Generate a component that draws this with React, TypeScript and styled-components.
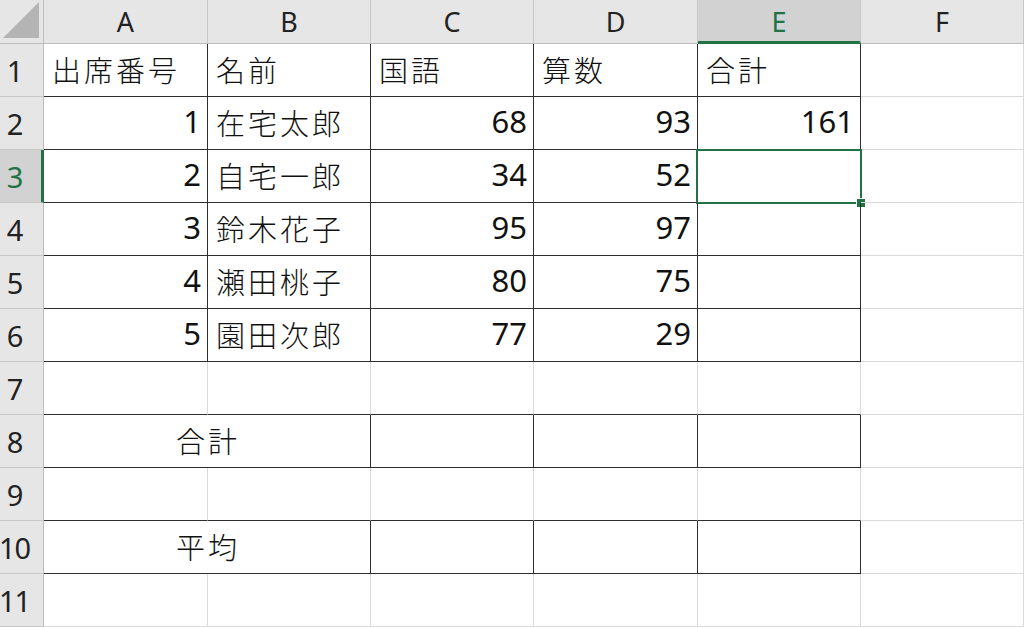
import styled, { createGlobalStyle } from "styled-components";

const GlobalStyle = createGlobalStyle`
    html, body {
        margin: 0;
        padding: 0;
        background: #ffffff;
        overflow: hidden;
    }
    body {
        font-family: "Noto Sans CJK JP", "Noto Sans", sans-serif;
        color: #111;
    }
`;

const GRID = "#dadada";
const LINE = "#2e2e2e";
const GREEN = "#217346";

const Sheet = styled.div`
    display: grid;
    grid-template-columns: 44px 164px 163px 163px 164px 163px 1fr;
    grid-template-rows: 44px repeat(11, 53px);
    width: 1024px;
    height: 628px;
    overflow: hidden;
`;

const Corner = styled.div`
    background: #e6e6e6;
    border-right: 1px solid #bdbdbd;
    border-bottom: 1px solid #bdbdbd;
    box-sizing: border-box;
    display: flex;
    align-items: flex-end;
    justify-content: flex-end;
    padding: 0 4px 5px 0;
    svg {
        display: block;
    }
`;

const ColHead = styled.div<{ $active?: boolean }>`
    box-sizing: border-box;
    background: ${(p) => (p.$active ? "#d2d2d2" : "#e6e6e6")};
    color: ${(p) => (p.$active ? GREEN : "#222")};
    border-right: 1px solid #c8c8c8;
    border-bottom: ${(p) => (p.$active ? `3px solid ${GREEN}` : "1px solid #bdbdbd")};
    display: flex;
    align-items: center;
    justify-content: center;
    padding-top: ${(p) => (p.$active ? "2px" : "0")};
    font-family: "Noto Sans", sans-serif;
    font-size: 27px;
    line-height: 1;
`;

const RowHead = styled.div<{ $active?: boolean }>`
    box-sizing: border-box;
    background: ${(p) => (p.$active ? "#d2d2d2" : "#e6e6e6")};
    color: ${(p) => (p.$active ? GREEN : "#222")};
    border-right: ${(p) => (p.$active ? `3px solid ${GREEN}` : "1px solid #bdbdbd")};
    border-bottom: 1px solid #c8c8c8;
    display: flex;
    align-items: center;
    padding-right: ${(p) => (p.$active ? "12px" : "14px")};
    justify-content: center;
    font-family: "Noto Sans", sans-serif;
    font-size: 29px;
    line-height: 1;
    letter-spacing: -1px;
`;

const Cell = styled.div<{
    $align?: "left" | "right" | "center";
    $right?: boolean;
    $bottom?: boolean;
    $span?: number;
}>`
    box-sizing: border-box;
    position: relative;
    grid-column: ${(p) => (p.$span ? `span ${p.$span}` : "auto")};
    border-right: 1px solid ${(p) => (p.$right ? LINE : GRID)};
    border-bottom: 1px solid ${(p) => (p.$bottom ? LINE : GRID)};
    display: flex;
    align-items: center;
    justify-content: ${(p) =>
        p.$align === "right" ? "flex-end" : p.$align === "center" ? "center" : "flex-start"};
    padding: 0 6px 2px 8px;
    font-size: 29px;
    font-weight: 300;
    line-height: 1;
    white-space: nowrap;
    overflow: visible;
`;

const Kanji = styled.span`
    letter-spacing: 3px;
`;

const Num = styled.span`
    font-family: "Noto Sans", sans-serif;
    font-weight: 400;
    font-size: 31px;
    margin-top: -2px;
`;

const Selection = styled.div`
    position: absolute;
    left: -2px;
    top: -1px;
    right: -2px;
    bottom: -2px;
    border: 2px solid ${GREEN};
    pointer-events: none;
`;

const Handle = styled.div`
    position: absolute;
    right: -6px;
    bottom: -6px;
    width: 8px;
    height: 8px;
    background: ${GREEN};
    border: 1px solid #fff;
`;

type Value = { t: string; num?: boolean } | null;

const rows: Value[][] = [
    [{ t: "出席番号" }, { t: "名前" }, { t: "国語" }, { t: "算数" }, { t: "合計" }, null],
    [{ t: "1", num: true }, { t: "在宅太郎" }, { t: "68", num: true }, { t: "93", num: true }, { t: "161", num: true }, null],
    [{ t: "2", num: true }, { t: "自宅一郎" }, { t: "34", num: true }, { t: "52", num: true }, null, null],
    [{ t: "3", num: true }, { t: "鈴木花子" }, { t: "95", num: true }, { t: "97", num: true }, null, null],
    [{ t: "4", num: true }, { t: "瀬田桃子" }, { t: "80", num: true }, { t: "75", num: true }, null, null],
    [{ t: "5", num: true }, { t: "園田次郎" }, { t: "77", num: true }, { t: "29", num: true }, null, null],
];

const cols = ["A", "B", "C", "D", "E", "F"];

function renderValue(v: Value) {
    if (!v) return null;
    return v.num ? <Num>{v.t}</Num> : <Kanji>{v.t}</Kanji>;
}

export default function App() {
    const cells: JSX.Element[] = [];

    // rows 1-6: bordered table A:E
    rows.forEach((row, ri) => {
        const r = ri + 1;
        cells.push(
            <RowHead key={`h${r}`} $active={r === 3}>
                {r}
            </RowHead>
        );
        row.forEach((v, ci) => {
            const inTable = ci < 5;
            const selected = r === 3 && ci === 4;
            cells.push(
                <Cell
                    key={`c${r}-${ci}`}
                    $align={v?.num ? "right" : "left"}
                    $right={inTable}
                    $bottom={inTable}
                >
                    {renderValue(v)}
                    {selected && (
                        <Selection>
                            <Handle />
                        </Selection>
                    )}
                </Cell>
            );
        });
    });

    // rows 7-11
    [7, 8, 9, 10, 11].forEach((r) => {
        cells.push(<RowHead key={`h${r}`}>{r}</RowHead>);
        const boxed = r === 8 || r === 10;
        const aboveBox = r === 7 || r === 9;
        if (boxed) {
            cells.push(
                <Cell key={`c${r}-ab`} $span={2} $align="center" $right $bottom>
                    <Kanji>{r === 8 ? "合計" : "平均"}</Kanji>
                </Cell>
            );
            [2, 3, 4].forEach((ci) => cells.push(<Cell key={`c${r}-${ci}`} $right $bottom />));
            cells.push(<Cell key={`c${r}-5`} />);
        } else {
            cols.forEach((_, ci) =>
                cells.push(<Cell key={`c${r}-${ci}`} $bottom={aboveBox && ci < 5} />)
            );
        }
    });

    return (
        <>
            <GlobalStyle />
            <Sheet>
                <Corner>
                    <svg width="36" height="36" viewBox="0 0 36 36">
                        <polygon points="0,36 36,36 36,0" fill="#b4b4b4" />
                    </svg>
                </Corner>
                {cols.map((c) => (
                    <ColHead key={c} $active={c === "E"}>
                        {c}
                    </ColHead>
                ))}
                {cells}
            </Sheet>
        </>
    );
}
